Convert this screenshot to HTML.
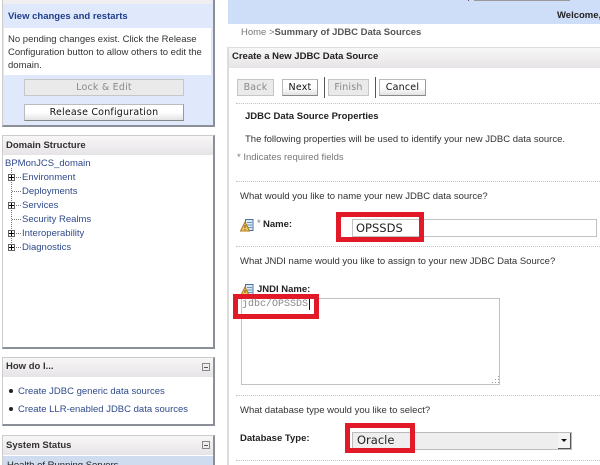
<!DOCTYPE html>
<html><head><meta charset="utf-8">
<style>
html,body{margin:0;padding:0;background:#fff}
#p{position:relative;width:600px;height:465px;overflow:hidden;background:#fff;font-family:"Liberation Sans",sans-serif;font-size:9.5px;color:#333}
#p div{position:absolute;white-space:nowrap}
#f{position:absolute;left:0;top:0;width:600px;height:465px;filter:blur(.35px)}
.t{position:absolute;white-space:nowrap;line-height:12px;margin-top:1px}
.b{font-weight:bold}
.l{color:#2f4a8c}
.panel{background:#fff;border:1px solid #ccc;border-right:2px solid #8a8f98;border-bottom:2px solid #8a8f98;box-sizing:border-box}
.hd{background:linear-gradient(#f8f7f7,#e6e4e6)}
.btn{box-sizing:border-box;border:1px solid #bbb;border-bottom:1px solid #888;border-right:1px solid #999;background:linear-gradient(#fff,#fff 50%,#e2e2e2);text-align:center;font-family:"DejaVu Sans",sans-serif;font-size:9.5px;color:#111;letter-spacing:.2px}
.dis{background:#eaeaea;color:#8a8a8a;border:1px solid #c6c6c6}
.dot{height:0;border-top:1px dotted #c4c4c4}
.red{box-sizing:border-box;border:5px solid #e21a28}
.inp{box-sizing:border-box;border:1px solid #c2c2c2;background:#fff}
.sep{width:1px;background:#555}
</style></head><body>
<div id="p"><div id="f">
<!-- left: change center -->
<div class="panel" style="left:2px;top:-2px;width:213px;height:129px;background:#dfe9fb"></div>
<div style="left:3px;top:0;width:209px;height:4px;background:#f1eeef"></div>
<span class="t b" style="left:8px;top:10px;color:#1f3d8a">View changes and restarts</span>
<div style="left:4px;top:28px;width:207px;height:47px;background:#fff"></div>
<span class="t" style="left:8px;top:33px">No pending changes exist. Click the Release</span>
<span class="t" style="left:8px;top:46px">Configuration button to allow others to edit the</span>
<span class="t" style="left:8px;top:59px">domain.</span>
<div class="btn dis" style="left:24px;top:79px;width:160px;height:17px;line-height:15px">Lock &amp; Edit</div>
<div class="btn" style="left:24px;top:104px;width:160px;height:17px;line-height:15px">Release Configuration</div>

<!-- domain structure -->
<div class="panel" style="left:2px;top:135px;width:213px;height:214px"></div>
<div class="hd" style="left:3px;top:136px;width:210px;height:19px"></div>
<span class="t b" style="left:6px;top:139px">Domain Structure</span>
<span class="t l" style="left:5px;top:157px">BPMonJCS_domain</span>
<span class="t l" style="left:22px;top:171px">Environment</span>
<span class="t l" style="left:22px;top:185px">Deployments</span>
<span class="t l" style="left:22px;top:199px">Services</span>
<span class="t l" style="left:22px;top:213px">Security Realms</span>
<span class="t l" style="left:22px;top:227px">Interoperability</span>
<span class="t l" style="left:22px;top:241px">Diagnostics</span>
<svg style="position:absolute;left:6px;top:168px" width="18" height="86" viewBox="0 0 18 86">
<g stroke="#777" stroke-width="1" stroke-dasharray="1 1" fill="none">
<path d="M5.5 0V79.5"/><path d="M10 9.5H16M6 23.5H16M10 37.5H16M6 51.5H16M10 65.5H16M10 79.5H16"/></g>
<g fill="#fff" stroke="#666"><rect x="2.5" y="6.5" width="6" height="6"/><rect x="2.5" y="34.5" width="6" height="6"/><rect x="2.5" y="62.5" width="6" height="6"/><rect x="2.5" y="76.5" width="6" height="6"/></g>
<path stroke="#000" d="M3 9.5H8M5.5 7V12M3 37.5H8M5.5 35V40M3 65.5H8M5.5 63V68M3 79.5H8M5.5 77V82"/>
</svg>

<!-- how do I -->
<div class="panel" style="left:2px;top:357px;width:213px;height:69px"></div>
<div class="hd" style="left:3px;top:358px;width:210px;height:19px"></div>
<span class="t b" style="left:6px;top:360px">How do I...</span>
<svg style="position:absolute;left:202px;top:363px" width="9" height="9"><rect x=".5" y=".5" width="7" height="7" fill="#eee" stroke="#888"/><path d="M2 4.5H6" stroke="#555"/></svg>
<div style="left:9px;top:389px;width:4px;height:4px;border-radius:50%;background:#222"></div>
<div style="left:9px;top:407px;width:4px;height:4px;border-radius:50%;background:#222"></div>
<span class="t l" style="left:18px;top:385px">Create JDBC generic data sources</span>
<span class="t l" style="left:18px;top:403px">Create LLR-enabled JDBC data sources</span>

<!-- system status -->
<div class="panel" style="left:2px;top:435px;width:213px;height:40px"></div>
<div class="hd" style="left:3px;top:436px;width:210px;height:19px"></div>
<span class="t b" style="left:6px;top:439px">System Status</span>
<svg style="position:absolute;left:202px;top:441px" width="9" height="9"><rect x=".5" y=".5" width="7" height="7" fill="#eee" stroke="#888"/><path d="M2 4.5H6" stroke="#555"/></svg>
<div style="left:3px;top:456px;width:210px;height:9px;background:#cfdcf0"></div>
<span class="t" style="left:7px;top:459px;color:#222">Health of Running Servers</span>

<!-- right top -->
<div style="left:228px;top:0;width:372px;height:24px;background:#cfdef8"></div>
<div style="left:468px;top:0;width:1px;height:1px;background:#555"></div>
<div style="left:474px;top:0;width:96px;height:1px;background:#999"></div>
<span class="t b" style="left:557px;top:9px;color:#222">Welcome,</span>
<span class="t" style="left:241px;top:26px;color:#777">Home &gt;<b style="color:#555">Summary of JDBC Data Sources</b></span>

<!-- main panel -->
<div style="left:227px;top:47px;width:373px;height:418px;border-left:2px solid #ddd;border-top:1px solid #ddd;box-sizing:border-box"></div>
<div class="hd" style="left:229px;top:48px;width:371px;height:20px"></div>
<span class="t b" style="left:232px;top:50px;color:#222">Create a New JDBC Data Source</span>

<div class="btn dis" style="left:237px;top:79px;width:37px;height:17px;line-height:15px">Back</div>
<div class="btn" style="left:282px;top:79px;width:36px;height:17px;line-height:15px">Next</div>
<div class="sep" style="left:324px;top:77px;height:21px"></div>
<div class="btn dis" style="left:328px;top:79px;width:41px;height:17px;line-height:15px">Finish</div>
<div class="sep" style="left:375px;top:77px;height:21px"></div>
<div class="btn" style="left:379px;top:79px;width:47px;height:17px;line-height:15px">Cancel</div>
<div class="dot" style="left:236px;top:103px;width:364px"></div>
<span class="t b" style="left:245px;top:110px;color:#222">JDBC Data Source Properties</span>
<span class="t" style="left:245px;top:133px">The following properties will be used to identify your new JDBC data source.</span>
<span class="t" style="left:237px;top:151px;color:#777">* Indicates required fields</span>

<div class="dot" style="left:236px;top:181px;width:364px"></div>
<span class="t" style="left:240px;top:190px">What would you like to name your new JDBC data source?</span>
<svg style="position:absolute;left:240px;top:219px" width="14" height="14" viewBox="0 0 14 14"><rect x="5.5" y=".5" width="7.5" height="11" fill="#dbe8f5" stroke="#48749c"/><path d="M7 3.5H12M7 6H12M7 8.5H12" stroke="#6d97bd"/><path d="M5 3 9.5 12H.5Z" fill="#f4c95a" stroke="#a87a20"/><path d="M5 6V9M5 10V11" stroke="#643"/></svg>
<span class="t" style="left:257px;top:217px;color:#777">*</span>
<span class="t b" style="left:263px;top:218px;color:#222">Name:</span>
<div class="inp" style="left:352px;top:219px;width:245px;height:18px"></div>
<div class="dot" style="left:236px;top:246px;width:364px"></div>
<span class="t" style="left:240px;top:255px">What JNDI name would you like to assign to your new JDBC Data Source?</span>
<svg style="position:absolute;left:240px;top:284px" width="14" height="14" viewBox="0 0 14 14"><rect x="5.5" y=".5" width="7.5" height="11" fill="#dbe8f5" stroke="#48749c"/><path d="M7 3.5H12M7 6H12M7 8.5H12" stroke="#6d97bd"/><path d="M5 3 9.5 12H.5Z" fill="#f4c95a" stroke="#a87a20"/><path d="M5 6V9M5 10V11" stroke="#643"/></svg>
<span class="t b" style="left:257px;top:283px;color:#222">JNDI Name:</span>
<div class="inp" style="left:241px;top:298px;width:259px;height:87px"></div>
<div style="left:309px;top:299px;width:1px;height:11px;background:#111"></div>
<svg style="position:absolute;left:490px;top:375px" width="10" height="10"><path d="M8.5 1v1M5.5 4v1M8.5 4v1M2.5 7v1M5.5 7v1M8.5 7v1" stroke="#999"/></svg>
<div class="dot" style="left:236px;top:395px;width:364px"></div>
<span class="t" style="left:240px;top:404px">What database type would you like to select?</span>
<span class="t b" style="left:240px;top:432px;color:#222">Database Type:</span>
<div class="inp" style="left:352px;top:432px;width:220px;height:18px;background:#eee;border-color:#bbb"></div>
<div style="left:558px;top:433px;width:13px;height:16px;box-sizing:border-box;background:#f4f4f4;border-right:1px solid #555;border-bottom:1px solid #555"></div>
<svg style="position:absolute;left:561px;top:439px" width="7" height="4"><path d="M0 0H6L3 3Z" fill="#111"/></svg>
<div class="dot" style="left:236px;top:460px;width:364px"></div>

<!-- red annotations -->
<div class="red" style="left:336px;top:212px;width:88px;height:30px"></div>
<span class="t" style="left:356px;top:220px;font-family:'DejaVu Sans',sans-serif;font-size:11.5px;line-height:15px;color:#222">OPSSDS</span>
<div class="red" style="left:233px;top:294px;width:86px;height:25px"></div>
<span class="t" style="left:242px;top:298px;font-family:'Liberation Mono',monospace;font-size:10px;color:#888">jdbc/OPSSDS</span>
<div class="red" style="left:345px;top:423px;width:70px;height:30px"></div>
<span class="t" style="left:357px;top:432px;font-family:'DejaVu Sans',sans-serif;font-size:11.5px;line-height:15px;color:#222">Oracle</span>
</div></div>
</body></html>
